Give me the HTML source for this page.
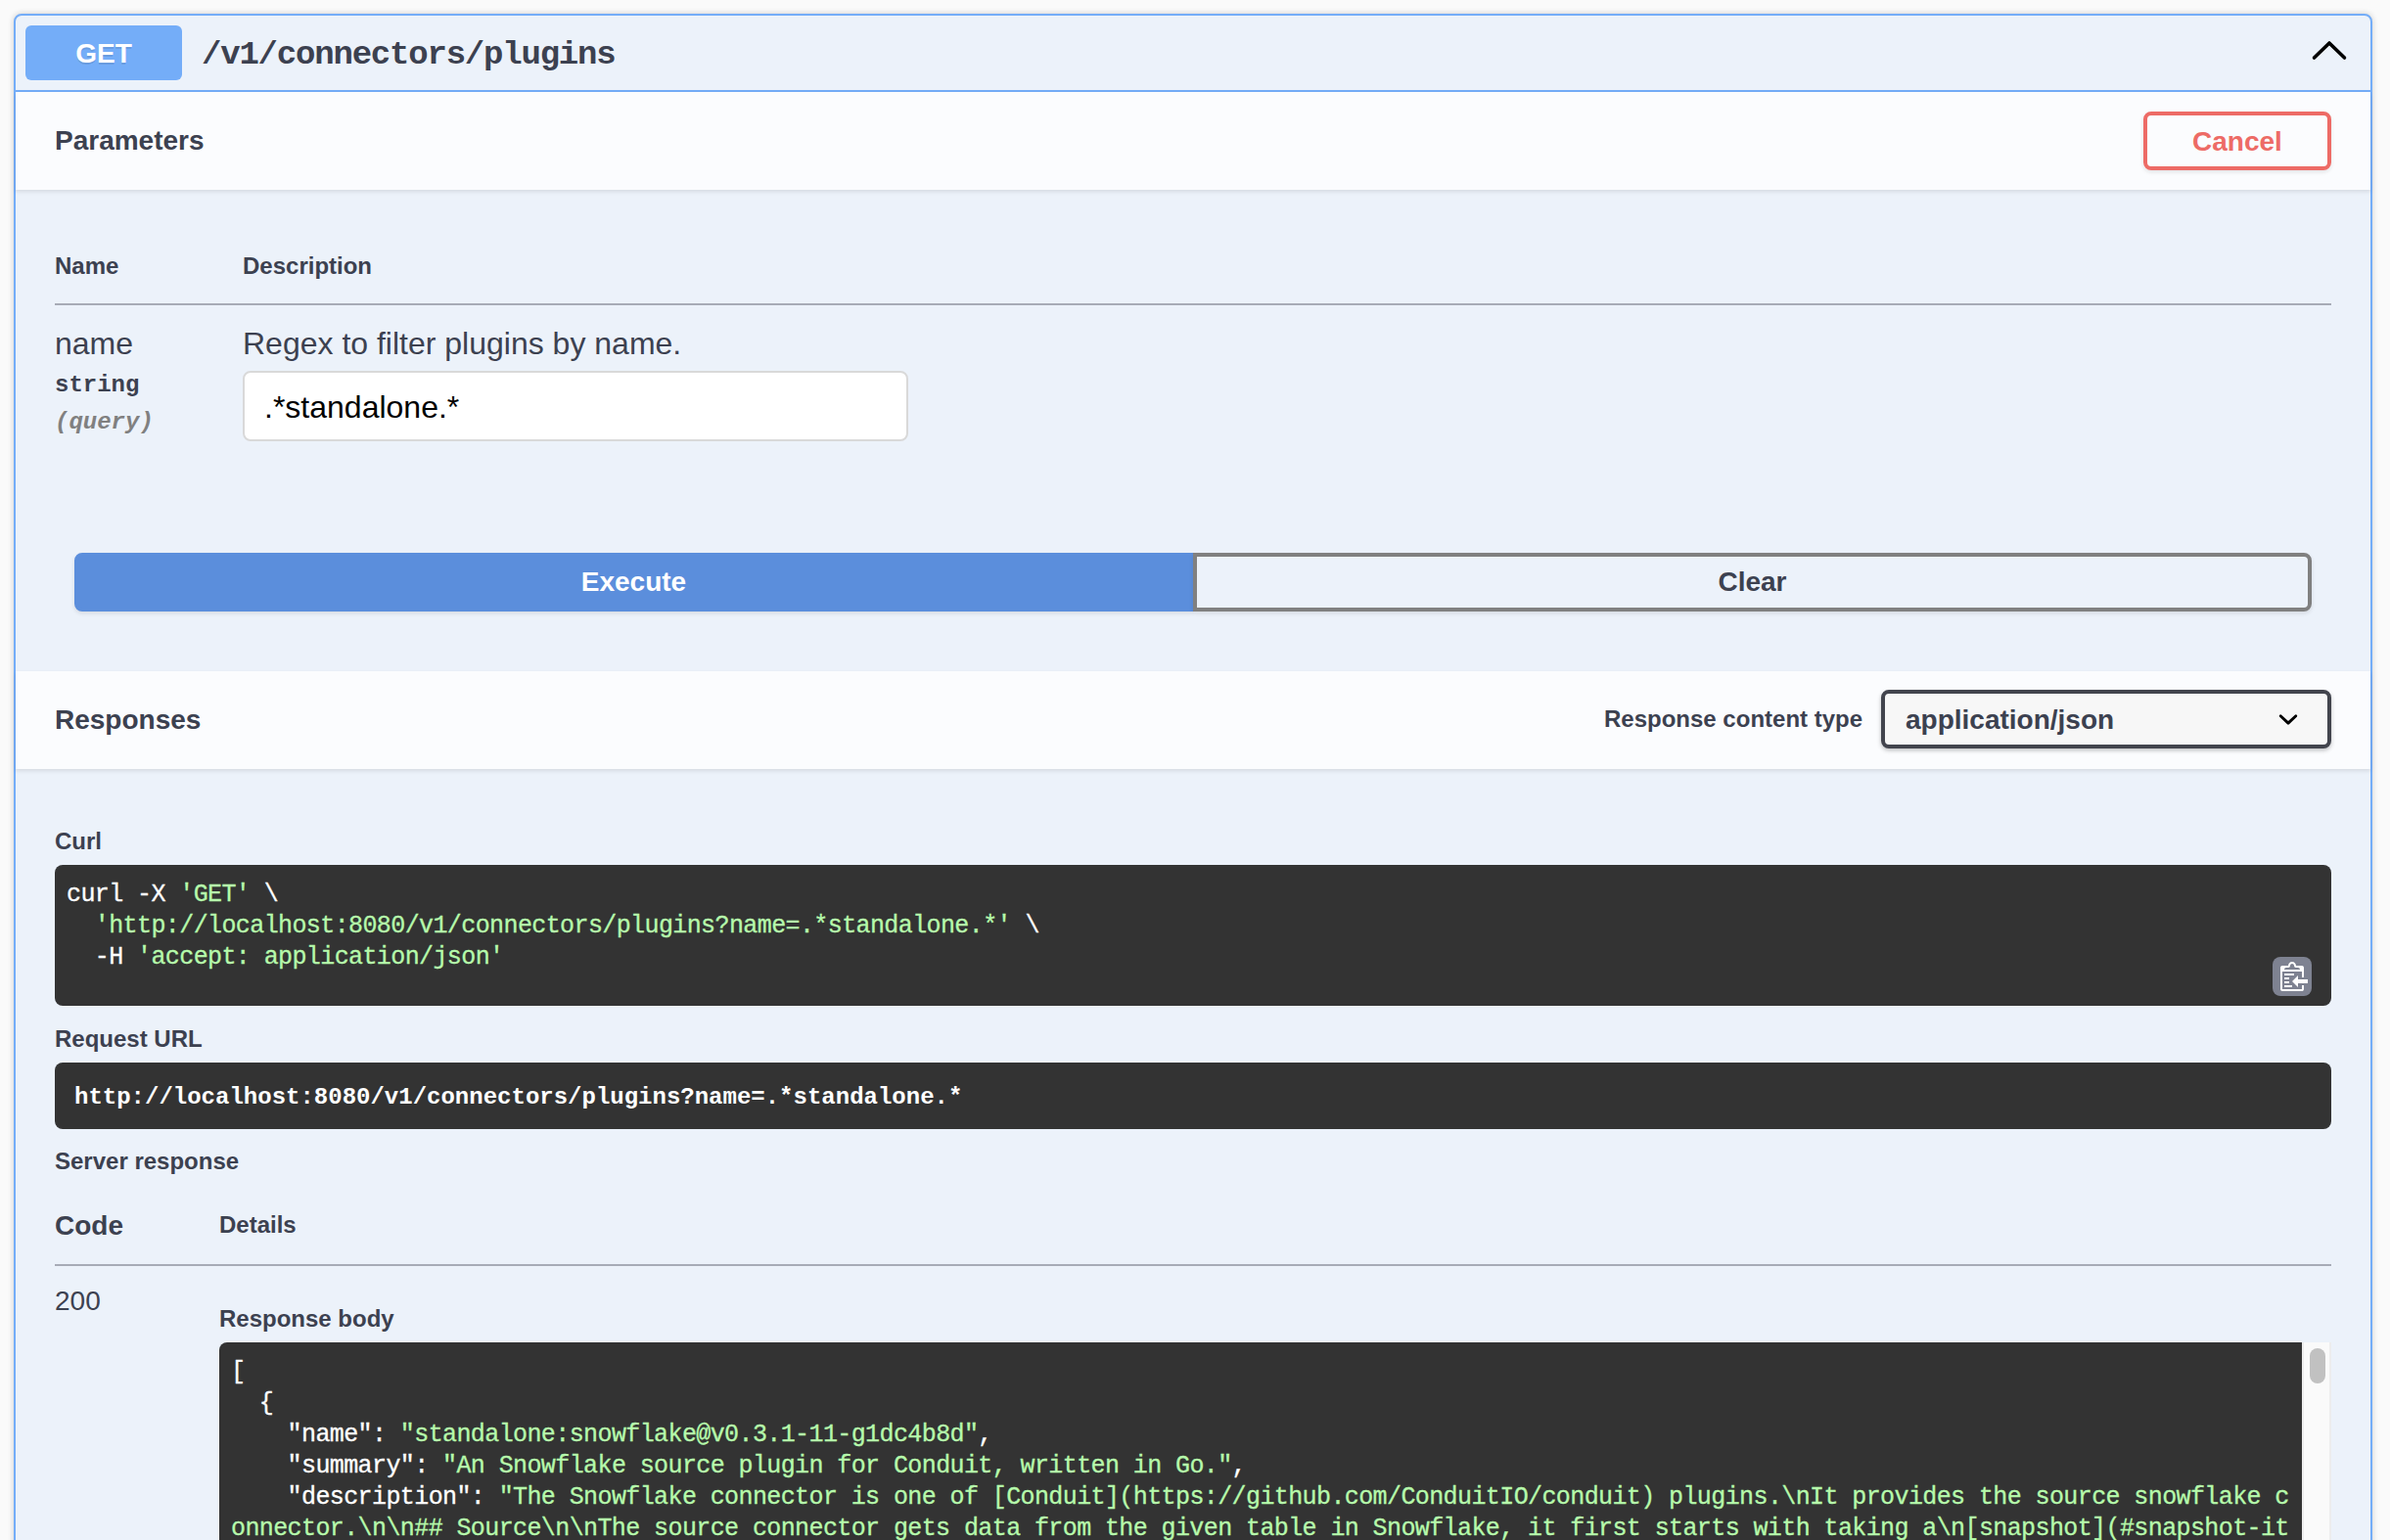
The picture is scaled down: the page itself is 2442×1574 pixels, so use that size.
<!DOCTYPE html>
<html><head><meta charset="utf-8">
<style>
*{box-sizing:border-box;margin:0;padding:0}
html,body{width:2442px;height:1574px;overflow:hidden;background:#fafafa}
body{position:relative;font-family:"Liberation Sans",sans-serif;color:#3c4150}
.abs{position:absolute;white-space:pre}
.mono{font-family:"Liberation Mono",monospace}
#opblock{position:absolute;left:14px;top:14px;width:2410px;height:1700px;border:2px solid #74adf8;border-radius:8px;background:#ecf2fa;box-shadow:0 0 6px rgba(0,0,0,.19)}
#summary{position:absolute;left:16px;top:16px;width:2406px;height:78px;border-bottom:2px solid #74adf8}
#badge{position:absolute;left:26px;top:26px;width:160px;height:56px;border-radius:6px;background:#74adf8;color:#fff;font-weight:bold;font-size:28px;text-align:center;line-height:58px;text-shadow:0 2px 0 rgba(0,0,0,.1)}
.hdr{position:absolute;left:16px;width:2406px;height:100px;background:#fbfcfe;box-shadow:0 2px 4px rgba(0,0,0,.1)}
.b{font-weight:bold}
.btn{position:absolute;border:4px solid #808080;border-radius:8px;box-shadow:0 2px 4px rgba(0,0,0,.1);font-weight:bold;font-size:28px;text-align:center}
.code{position:absolute;background:#333333;border-radius:8px;color:#fff}
.g{color:#b6faab}
</style></head>
<body>
<div id="opblock"></div>
<div id="summary"></div>
<div id="badge">GET</div>
<div class="abs mono b" style="left:206px;top:36px;font-size:34px;letter-spacing:-1.2px;line-height:40px;color:#3c4150">/v1/connectors/plugins</div>
<svg class="abs" style="left:2350px;top:29px" width="60" height="44" viewBox="0 0 60 44"><polyline points="14.5,30 30,15 45.5,30" fill="none" stroke="#000" stroke-width="3.6" stroke-linecap="round" stroke-linejoin="round"/></svg>

<!-- Parameters header -->
<div class="hdr" style="top:94px"></div>
<div class="abs b" style="left:56px;top:128px;font-size:28px;line-height:32px">Parameters</div>
<div class="btn" style="left:2190px;top:114px;width:192px;height:60px;border-color:#ed6b66;color:#ed6b66;line-height:52px;padding-top:1px">Cancel</div>

<!-- table -->
<div class="abs b" style="left:56px;top:257px;font-size:24px;line-height:30px">Name</div>
<div class="abs b" style="left:248px;top:257px;font-size:24px;line-height:30px">Description</div>
<div class="abs" style="left:56px;top:310px;width:2326px;height:2px;background:#a7abb6"></div>
<div class="abs" style="left:56px;top:333px;font-size:32px;line-height:36px">name</div>
<div class="abs mono b" style="left:56px;top:379px;font-size:24px;line-height:30px">string</div>
<div class="abs mono b" style="left:56px;top:417px;font-size:24px;line-height:30px;font-style:italic;color:#808080">(query)</div>
<div class="abs" style="left:248px;top:333px;font-size:32px;line-height:36px">Regex to filter plugins by name.</div>
<div class="abs" style="left:248px;top:379px;width:680px;height:72px;background:#fff;border:2px solid #d9d9d9;border-radius:8px"></div>
<div class="abs" style="left:270px;top:398px;font-size:32px;line-height:36px;color:#000">.*standalone.*</div>

<!-- buttons -->
<div class="btn" style="left:76px;top:565px;width:1143px;height:60px;background:#5b8edc;border-color:#5b8edc;color:#fff;border-radius:8px 0 0 8px;line-height:52px">Execute</div>
<div class="btn" style="left:1219px;top:565px;width:1143px;height:60px;border-radius:0 8px 8px 0;line-height:52px">Clear</div>

<!-- Responses header -->
<div class="hdr" style="top:686px"></div>
<div class="abs b" style="left:56px;top:720px;font-size:28px;line-height:32px">Responses</div>
<div class="abs b" style="left:1639px;top:720px;font-size:24px;line-height:30px">Response content type</div>
<div class="abs" style="left:1922px;top:705px;width:460px;height:60px;background:#f7f7f7;border:4px solid #42444d;border-radius:8px;box-shadow:0 2px 4px rgba(0,0,0,.25)"></div>
<div class="abs b" style="left:1947px;top:720px;font-size:28px;line-height:32px">application/json</div>
<svg class="abs" style="left:2318px;top:715px" width="40" height="40" viewBox="0 0 20 20"><path d="M13.418 7.859a.695.695 0 0 1 .978 0 .68.68 0 0 1 0 .969l-3.908 3.83a.697.697 0 0 1-.979 0l-3.908-3.83a.68.68 0 0 1 0-.969.695.695 0 0 1 .978 0L10 11l3.418-3.141z"/></svg>

<!-- curl -->
<div class="abs b" style="left:56px;top:845px;font-size:24px;line-height:30px">Curl</div>
<div class="code" style="left:56px;top:884px;width:2326px;height:144px"></div>
<div class="abs mono" style="left:68px;top:899px;font-size:25px;letter-spacing:-0.6px;line-height:32px;color:#fff;-webkit-text-stroke:0.3px currentColor">curl -X <span class="g">'GET'</span> \
  <span class="g">'http://localhost:8080/v1/connectors/plugins?name=.*standalone.*'</span> \
  -H <span class="g">'accept: application/json'</span></div>
<div class="abs" style="left:2322px;top:978px;width:40px;height:40px;border-radius:8px;background:#7e8291"></div>
<svg class="abs" style="left:2330px;top:981px" width="32" height="32" viewBox="0 0 16 16"><path fill="#fff" fill-rule="evenodd" d="M2 13h4v1H2v-1zm5-6H2v1h5V7zm2 3V8l-3 3 3 3v-2h5v-2H9zM4.5 9H2v1h2.5V9zM2 12h2.5v-1H2v1zm9 1h1v2c-.02.28-.11.52-.3.7-.19.18-.42.28-.7.3H1c-.55 0-1-.45-1-1V4c0-.55.45-1 1-1h3c0-1.110.89-2 2-2 1.11 0 2 .89 2 2h3c.55 0 1 .45 1 1v5h-1V6H1v9h10v-2zM2 5h8c0-.55-.45-1-1-1H8c-.55 0-1-.45-1-1s-.45-1-1-1-1 .45-1 1-.45 1-1 1H3c-.55 0-1 .45-1 1z"/></svg>

<!-- request url -->
<div class="abs b" style="left:56px;top:1047px;font-size:24px;line-height:30px">Request URL</div>
<div class="code" style="left:56px;top:1086px;width:2326px;height:68px"></div>
<div class="abs mono b" style="left:76px;top:1107px;font-size:24px;line-height:30px;color:#fff">http://localhost:8080/v1/connectors/plugins?name=.*standalone.*</div>

<div class="abs b" style="left:56px;top:1172px;font-size:24px;line-height:30px">Server response</div>

<div class="abs b" style="left:56px;top:1237px;font-size:28px;line-height:32px">Code</div>
<div class="abs b" style="left:224px;top:1237px;font-size:24px;line-height:30px">Details</div>
<div class="abs" style="left:56px;top:1292px;width:2326px;height:2px;background:#a7abb6"></div>
<div class="abs" style="left:56px;top:1314px;font-size:28px;line-height:32px">200</div>
<div class="abs b" style="left:224px;top:1333px;font-size:24px;line-height:30px">Response body</div>

<div class="code" style="left:224px;top:1372px;width:2158px;height:400px;border-radius:8px 0 0 8px"></div>
<div class="abs mono" style="left:236px;top:1387px;font-size:25px;letter-spacing:-0.6px;line-height:32px;color:#fff;-webkit-text-stroke:0.3px currentColor">[
  {
    "name": <span class="g">"standalone:snowflake@v0.3.1-11-g1dc4b8d"</span>,
    "summary": <span class="g">"An Snowflake source plugin for Conduit, written in Go."</span>,
    "description": <span class="g">"The Snowflake connector is one of [Conduit](https://github.com/ConduitIO/conduit) plugins.\nIt provides the source snowflake c</span>
<span class="g">onnector.\n\n## Source\n\nThe source connector gets data from the given table in Snowflake, it first starts with taking a\n[snapshot](#snapshot-it</span></div>
<div class="abs" style="left:2352px;top:1372px;width:30px;height:300px;background:#fafafa;border-left:2px solid #ededed;border-right:2px solid #ededed"></div>
<div class="abs" style="left:2360px;top:1378px;width:16px;height:36px;border-radius:8px;background:#c1c1c1"></div>
</body></html>
